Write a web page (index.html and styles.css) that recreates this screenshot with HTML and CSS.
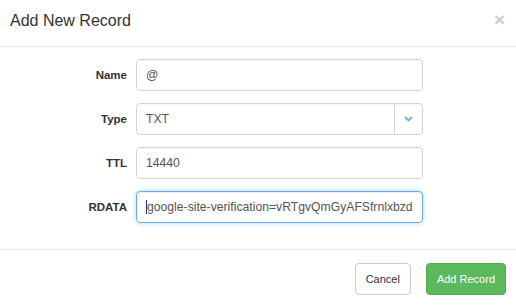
FILE: index.html
```html
<!DOCTYPE html>
<html>
<head>
<meta charset="utf-8">
<link rel="stylesheet" href="styles.css">
</head>
<body>
<div class="modal">
  <div class="modal-header">
    <h4 class="modal-title">Add New Record</h4>
    <span class="close">×</span>
  </div>
  <div class="modal-body">
    <div class="row">
      <label class="label">Name</label>
      <div class="field">@</div>
    </div>
    <div class="row">
      <label class="label">Type</label>
      <div class="field select">
        <span class="select-value">TXT</span>
        <span class="select-arrow">
          <svg width="9" height="6" viewBox="0 0 9 6"><polyline points="1,1 4.5,4.5 8,1" fill="none" stroke="#7ea9d6" stroke-width="1.8"/></svg>
        </span>
      </div>
    </div>
    <div class="row">
      <label class="label">TTL</label>
      <div class="field">14440</div>
    </div>
    <div class="row">
      <label class="label">RDATA</label>
      <div class="field focus"><span class="caret"></span>google-site-verification=vRTgvQmGyAFSfrnlxbzd</div>
    </div>
  </div>
  <div class="modal-footer">
    <button class="btn btn-default">Cancel</button>
    <button class="btn btn-success">Add Record</button>
  </div>
</div>
</body>
</html>
```
FILE: styles.css
```css
* { box-sizing: border-box; }
html, body { margin: 0; padding: 0; background: #fff; }
body { font-family: "Liberation Sans", Arial, sans-serif; color: #333; width: 516px; height: 306px; overflow: hidden; }

.modal { display: flex; flex-direction: column; height: 306px; }

.modal-header {
  height: 47px;
  padding: 12px 11px 0 10px;
  border-bottom: 1px solid #e5e5e5;
  display: flex;
  justify-content: space-between;
  align-items: flex-start;
}
.modal-title { margin: 0; font-size: 16px; line-height: 18px; font-weight: normal; color: #333; }
.close { font-size: 19px; font-weight: bold; line-height: 18px; color: #000; opacity: .2; margin-top: -1px; }

.modal-body {
  padding: 12px 0 26px 0;
  display: flex;
  flex-direction: column;
  gap: 12px;
}
.row { display: grid; grid-template-columns: 127px 287px; column-gap: 9px; align-items: center; }
.label { text-align: right; font-weight: bold; font-size: 11.5px; color: #333; }

.field {
  height: 32px;
  border: 1px solid #d4d4d4;
  border-radius: 4px;
  padding: 0 9px;
  font-size: 12.2px;
  color: #555;
  display: flex;
  align-items: center;
  white-space: nowrap;
  overflow: hidden;
  box-shadow: inset 0 1px 1px rgba(0,0,0,.04);
}
.field.select { padding: 0 0 0 9px; }
.select-value { flex: 1; }
.select-arrow {
  width: 28px;
  height: 100%;
  border-left: 1px solid #d4d4d4;
  display: flex;
  align-items: center;
  justify-content: center;
}
.select-arrow svg { display: block; }
.field.focus {
  border-color: #66afe9;
  box-shadow: inset 0 1px 1px rgba(0,0,0,.075), 0 0 5px rgba(102,175,233,.5);
}
.caret { display: inline-block; width: 1px; height: 14px; background: #333; }

.modal-footer {
  border-top: 1px solid #e5e5e5;
  padding: 13px 10px 11px 0;
  display: flex;
  justify-content: flex-end;
  gap: 15px;
}
.btn {
  height: 32px;
  padding: 0 10px;
  border-radius: 4px;
  font-family: "Liberation Sans", Arial, sans-serif;
  font-size: 11px;
  border: 1px solid #ccc;
  background: #fff;
  color: #333;
}
.btn-success { background: #5cb85c; border-color: #4cae4c; color: #fff; }
```
